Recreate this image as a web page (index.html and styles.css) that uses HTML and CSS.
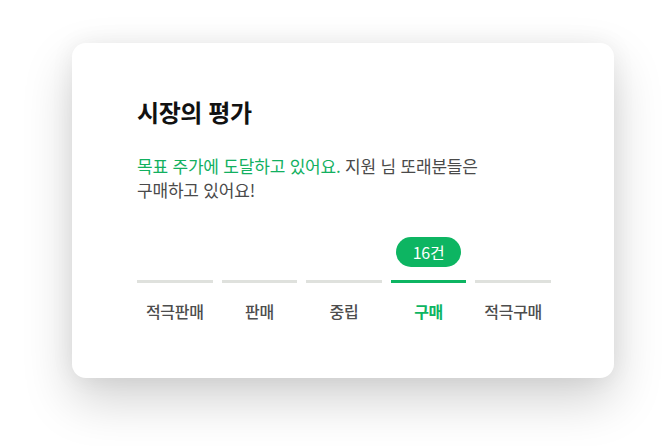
FILE: index.html
```html
<!DOCTYPE html>
<html lang="ko">
<head>
<meta charset="utf-8">
<link rel="stylesheet" href="styles.css">
</head>
<body>
<div class="stage">
  <section class="card">
    <h2 class="title">시장의 평가</h2>
    <p class="desc"><span class="hl">목표 주가에 도달하고 있어요.</span> 지원 님 또래분들은<br>구매하고 있어요!</p>
    <div class="scale">
      <div class="seg"><div class="badge-slot"></div><div class="bar"></div><div class="label">적극판매</div></div>
      <div class="seg"><div class="badge-slot"></div><div class="bar"></div><div class="label">판매</div></div>
      <div class="seg"><div class="badge-slot"></div><div class="bar"></div><div class="label">중립</div></div>
      <div class="seg active"><div class="badge-slot"><span class="badge">16건</span></div><div class="bar"></div><div class="label">구매</div></div>
      <div class="seg"><div class="badge-slot"></div><div class="bar"></div><div class="label">적극구매</div></div>
    </div>
  </section>
</div>
</body>
</html>
```
FILE: styles.css
```css
* { box-sizing: border-box; }
html, body { margin: 0; padding: 0; background: #ffffff; }
body {
  font-family: "Noto Sans CJK KR", "Noto Sans", sans-serif;
  width: 665px;
  height: 446px;
  overflow: hidden;
}
.stage {
  padding: 43px 0 0 72px;
}
.card {
  width: 542px;
  height: 335px;
  background: #fff;
  border-radius: 14px;
  box-shadow: 0 22px 50px rgba(0, 0, 0, 0.18), 0 0 24px rgba(0, 0, 0, 0.06);
  padding: 53px 63px 0 65px;
}
.title {
  margin: 0;
  font-size: 24px;
  font-weight: 700;
  line-height: 32px;
  color: #111;
  letter-spacing: -0.4px;
}
.desc {
  margin: 26px 0 0;
  font-size: 17px;
  line-height: 24px;
  color: #4a4a4a;
  letter-spacing: -0.2px;
}
.hl { color: #12b05f; }
.scale {
  margin-top: 33px;
  display: grid;
  grid-template-columns: repeat(5, 1fr);
  column-gap: 9px;
}
.seg {
  display: flex;
  flex-direction: column;
  align-items: stretch;
}
.badge-slot {
  height: 45px;
  display: flex;
  justify-content: center;
  align-items: flex-start;
  padding-top: 2px;
}
.badge {
  display: inline-flex;
  align-items: center;
  justify-content: center;
  width: 65px;
  height: 30px;
  border-radius: 15px;
  background: #0db562;
  color: #fff;
  font-size: 16px;
  letter-spacing: -0.2px;
}
.bar {
  height: 3px;
  background: #dfe1dd;
}
.active .bar { background: #0db562; }
.label {
  margin-top: 17px;
  text-align: center;
  font-size: 16px;
  line-height: 22px;
  color: #4d4d4d;
  font-weight: 500;
  letter-spacing: -0.3px;
}
.active .label { color: #0db562; font-weight: 600; }
```
